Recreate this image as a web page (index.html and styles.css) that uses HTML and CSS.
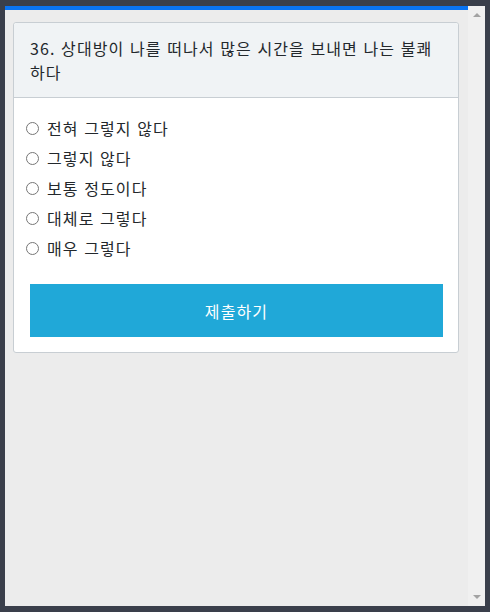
FILE: index.html
```html
<!DOCTYPE html>
<html lang="ko">
<head>
    <meta charset="UTF-8">
    <meta name="viewport" content="width=device-width, initial-scale=1.0">
    <title>설문</title>
    <link rel="stylesheet" href="styles.css">
</head>
<body>
    <div class="window">
        <div class="page">
            <div class="card">
                <div class="card-header">36. 상대방이 나를 떠나서 많은 시간을 보내면 나는 불쾌하다</div>
                <div class="options">
                    <label class="option"><input type="radio" name="q36" value="1"> 전혀 그렇지 않다</label>
                    <label class="option"><input type="radio" name="q36" value="2"> 그렇지 않다</label>
                    <label class="option"><input type="radio" name="q36" value="3"> 보통 정도이다</label>
                    <label class="option"><input type="radio" name="q36" value="4"> 대체로 그렇다</label>
                    <label class="option"><input type="radio" name="q36" value="5"> 매우 그렇다</label>
                </div>
                <div class="actions">
                    <button class="submit" type="button">제출하기</button>
                </div>
            </div>
        </div>
        <div class="scrollbar">
            <span class="arrow up"></span>
            <span class="arrow down"></span>
        </div>
    </div>
</body>
</html>
```

FILE: styles.css
```css
body {
    margin: 0;
    background-color: #3a3f4b;
    font-family: "Noto Sans CJK KR", "Noto Sans", sans-serif;
    color: #23282c;
    letter-spacing: 1.1px;
}
.window {
    display: flex;
    height: 600px;
    margin: 6px 5px;
}
.page {
    flex: 1;
    background-color: #ececec;
    border-top: 4px solid #0a74f2;
    padding: 12px 9px 0 8px;
}
.card {
    background-color: #fff;
    border: 1px solid #c8ced3;
    border-radius: 3px;
}
.card-header {
    background-color: #f0f3f5;
    border-bottom: 1px solid #c8ced3;
    border-radius: 3px 3px 0 0;
    padding: 13px 16px 13px 16px;
    font-size: 16px;
    line-height: 24px;
}
.options {
    padding: 15px 0 21px 12px;
}
.option {
    display: flex;
    align-items: center;
    height: 30px;
    font-size: 16px;
}
.option input {
    width: 13px;
    height: 13px;
    margin: 0 8px 0 0;
}
.actions {
    padding: 0 15px 15px 16px;
}
.submit {
    display: block;
    width: 100%;
    height: 53px;
    border: none;
    background-color: #20a8d8;
    color: #fff;
    font-family: inherit;
    font-size: 16px;
    letter-spacing: 1.1px;
    cursor: pointer;
}
.scrollbar {
    width: 17px;
    background-color: #f0f0f0;
    display: flex;
    flex-direction: column;
    justify-content: space-between;
    align-items: center;
    padding: 7px 0;
    box-sizing: border-box;
}
.arrow {
    width: 0;
    height: 0;
    border-left: 4px solid transparent;
    border-right: 4px solid transparent;
}
.arrow.up {
    border-bottom: 4px solid #a3a3a3;
}
.arrow.down {
    border-top: 4px solid #a3a3a3;
}
```
